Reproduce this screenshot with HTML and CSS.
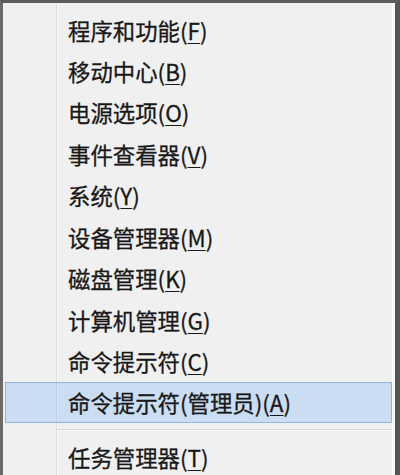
FILE: index.html
```html
<!DOCTYPE html>
<html lang="zh-CN">
<head>
<meta charset="utf-8">
<title>菜单</title>
<link rel="stylesheet" href="styles.css">
</head>
<body>
<div class="menu">
  <ul class="list">
    <li class="item">程序和功能(<u>F</u>)</li>
    <li class="item">移动中心(<u>B</u>)</li>
    <li class="item">电源选项(<u>O</u>)</li>
    <li class="item">事件查看器(<u>V</u>)</li>
    <li class="item">系统(<u>Y</u>)</li>
    <li class="item">设备管理器(<u>M</u>)</li>
    <li class="item">磁盘管理(<u>K</u>)</li>
    <li class="item">计算机管理(<u>G</u>)</li>
    <li class="item">命令提示符(<u>C</u>)</li>
    <li class="item active">命令提示符(管理员)(<u>A</u>)</li>
    <li class="sep"></li>
    <li class="item">任务管理器(<u>T</u>)</li>
  </ul>
</div>
</body>
</html>
```
FILE: styles.css
```css
html, body {
  margin: 0;
  padding: 0;
  background: #f0f0f0;
}
body {
  width: 400px;
  height: 475px;
  overflow: hidden;
}
.menu {
  box-sizing: border-box;
  width: 400px;
  height: 475px;
  border-top: 3px solid #5c5c5c;
  border-left: 3px solid #6a6a6a;
  border-right: 5px solid #555555;
  background:
    linear-gradient(to right,
      transparent 0, transparent 53px,
      #dcdcdc 53px, #dcdcdc 54px,
      #fbfbfb 54px, #fbfbfb 55px,
      transparent 55px),
    #f0f0f0;
  box-shadow: inset -3px 0 0 #fafafa;
  font-family: "Noto Sans CJK SC", "Microsoft YaHei", sans-serif;
  color: #181818;
  overflow: hidden;
}
.list {
  list-style: none;
  margin: 0;
  padding: 6px 0 0 0;
}
.item {
  box-sizing: border-box;
  height: 41.45px;
  margin: 0 3px 0 2px;
  padding-left: 62px;
  display: flex;
  align-items: center;
  font-size: 22.4px;
  line-height: 1;
  white-space: nowrap;
  border: 1px solid transparent;
  -webkit-text-stroke: 0.3px #181818;
}
.item u {
  text-decoration-thickness: 1px;
  text-underline-offset: 3px;
}
.active {
  background: rgba(120, 180, 245, 0.32);
  border-color: #8fb4dd;
}
.sep {
  height: 13px;
  margin: 0 3px 0 54px;
  display: flex;
  flex-direction: column;
  justify-content: center;
}
.sep::before {
  content: "";
  display: block;
  height: 1px;
  background: #d6d6d6;
  border-bottom: 1px solid #fbfbfb;
}
```
